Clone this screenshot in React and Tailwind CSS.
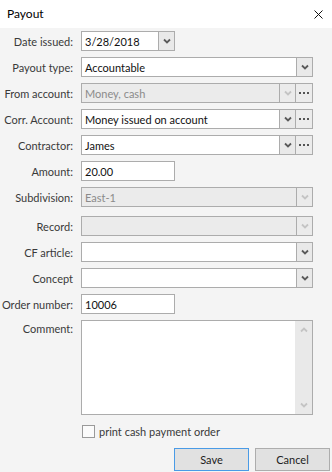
import React from "react";

const font = { fontFamily: 'Lato, "Noto Sans", sans-serif' };

function Chevron({ disabled }) {
  return (
    <svg width="8" height="6" viewBox="0 0 8 6" className="block">
      <polyline
        points="1,1.5 4,4.5 7,1.5"
        fill="none"
        stroke={disabled ? "#c4c4c4" : "#5a5a5a"}
        strokeWidth="1.8"
      />
    </svg>
  );
}

function Combo({ value, disabled, className = "" }) {
  return (
    <div
      className={`flex h-5 border border-[#acacac] ${disabled ? "bg-[#ebebeb]" : "bg-white"} ${className}`}
    >
      <div
        className={`flex-1 flex items-center pl-[3px] text-[11px] leading-none truncate ${disabled ? "text-[#8a8a8a]" : "text-[#111]"}`}
      >
        {value}
      </div>
      <div
        className={`w-4 flex items-center justify-center border-l border-[#acacac] ${disabled ? "bg-[#ebebeb]" : "bg-[#e9e9e9]"}`}
      >
        <Chevron disabled={disabled} />
      </div>
    </div>
  );
}

function Dots() {
  return (
    <div className="w-[17px] h-5 flex items-center justify-center gap-[2px] border border-l-0 border-[#acacac] bg-[#ececec]">
      <span className="w-[2px] h-[2px] bg-[#555]" />
      <span className="w-[2px] h-[2px] bg-[#555]" />
      <span className="w-[2px] h-[2px] bg-[#555]" />
    </div>
  );
}

function Input({ value, className = "" }) {
  return (
    <div
      className={`h-5 flex items-center pl-[3px] border border-[#acacac] bg-white text-[11px] leading-none text-[#111] ${className}`}
    >
      {value}
    </div>
  );
}

function Row({ label, children, className = "", top }) {
  return (
    <div className={`flex ${top ? "items-start" : "items-center"} ${className}`}>
      <div
        className={`w-[81px] shrink-0 pr-[8px] text-right text-[11px] leading-none text-[#3a3a3a] whitespace-nowrap ${top ? "pt-[3px]" : ""}`}
      >
        {label}
      </div>
      <div className="flex-1 flex pr-[19px]">{children}</div>
    </div>
  );
}

export default function App() {
  return (
    <div className="w-[332px] h-[472px] bg-[#f4f4f4] flex flex-col overflow-hidden" style={font}>
      <div className="h-7 bg-white flex items-center justify-between pl-[7px] pr-[9px] shrink-0">
        <span className="text-[12px] text-black leading-none">Payout</span>
        <svg width="9" height="9" viewBox="0 0 9 9">
          <path d="M0.5 0.5 L8.5 8.5 M8.5 0.5 L0.5 8.5" stroke="#111" strokeWidth="1" fill="none" />
        </svg>
      </div>
      <div className="flex flex-col pt-[3px]">
        <Row label="Date issued:">
          <Combo value="3/28/2018" className="w-[94px]" />
        </Row>
        <Row label="Payout type:" className="mt-1.5">
          <Combo value="Accountable" className="flex-1" />
        </Row>
        <Row label="From account:" className="mt-1.5">
          <Combo value="Money, cash" disabled className="flex-1" />
          <Dots />
        </Row>
        <Row label="Corr. Account:" className="mt-1.5">
          <Combo value="Money issued on account" className="flex-1" />
          <Dots />
        </Row>
        <Row label="Contractor:" className="mt-1.5">
          <Combo value="James" className="flex-1" />
          <Dots />
        </Row>
        <Row label="Amount:" className="mt-1.5">
          <Input value="20.00" className="w-[94px]" />
        </Row>
        <Row label="Subdivision:" className="mt-1.5">
          <Combo value="East-1" disabled className="flex-1" />
        </Row>
        <Row label="Record:" className="mt-[9px]">
          <Combo value="" disabled className="flex-1" />
        </Row>
        <Row label="CF article:" className="mt-1.5">
          <Combo value="" className="flex-1" />
        </Row>
        <Row label="Concept" className="mt-1.5">
          <Combo value="" className="flex-1" />
        </Row>
        <Row label="Order number:" className="mt-1.5">
          <Input value="10006" className="w-[94px]" />
        </Row>
        <Row label="Comment:" className="mt-1.5" top>
          <div className="flex-1 h-[95px] border border-[#acacac] bg-white flex justify-end">
            <div className="w-[17px] h-full bg-[#e9e9e9] flex flex-col items-center justify-between py-[6px]">
              <svg width="8" height="6" viewBox="0 0 8 6">
                <polyline points="1,4.5 4,1.5 7,4.5" fill="none" stroke="#c4c4c4" strokeWidth="1.8" />
              </svg>
              <Chevron disabled />
            </div>
          </div>
        </Row>
        <div className="flex items-center mt-[10px] pl-[82px]">
          <div className="w-[13px] h-[13px] border border-[#9a9a9a] bg-[#fbfbfb]" />
          <span className="ml-[4px] text-[11px] leading-none text-[#3a3a3a]">print cash payment order</span>
        </div>
        <div className="flex justify-end gap-[6px] mt-[10px] pr-[2px]">
          <div className="w-[75px] h-[23px] flex items-center justify-center border border-[#4a9be6] bg-[#e1e1e1] text-[11px] text-[#222] leading-none">
            Save
          </div>
          <div className="w-[75px] h-[23px] flex items-center justify-center border border-[#adadad] bg-[#e1e1e1] text-[11px] text-[#222] leading-none">
            Cancel
          </div>
        </div>
      </div>
    </div>
  );
}
